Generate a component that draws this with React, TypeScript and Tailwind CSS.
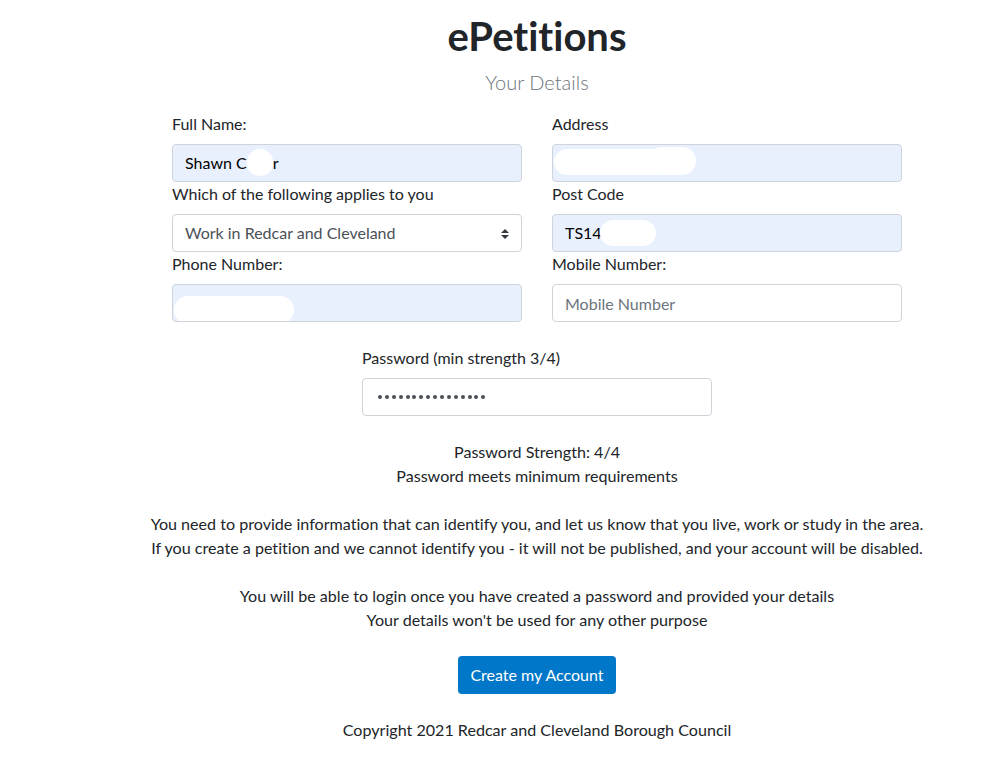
import React from 'react';

const font = { fontFamily: 'Lato, "Noto Sans", sans-serif' };

function Label({ children }: { children: React.ReactNode }) {
  return <label className="block h-6 mb-2 text-[16px] leading-6 text-[#212529]">{children}</label>;
}

function Blob({ className }: { className: string }) {
  return <span className={`absolute bg-white rounded-full ${className}`} />;
}

export default function App() {
  return (
    <div className="min-h-[758px] w-[996px] bg-white text-[#212529] [font-variant-ligatures:none]" style={font}>
      <div className="w-[730px] ml-[172px] pt-[12px]">
        <h1 className="text-center text-[40px] leading-[48px] font-bold">ePetitions</h1>
        <h2 className="text-center text-[20px] leading-6 mt-[10px] text-[#6c757d] font-light">Your Details</h2>

        <div className="grid grid-cols-2 gap-x-[30px] mt-[18px]">
          <div>
            <Label>Full Name:</Label>
            <div className="h-[38px] rounded border border-[#ced4da] bg-[#e8f0fe] px-3 flex items-center text-[16px] text-black">
              <span>Shawn C</span>
              <span className="inline-block w-[26px] h-[27px] rounded-full bg-white -mt-[1px]" />
              <span>r</span>
            </div>
            <Label>Which of the following applies to you</Label>
            <div className="relative h-[38px] rounded border border-[#ced4da] bg-white px-3 flex items-center text-[16px] text-[#495057]">
              <span>Work in Redcar and Cleveland</span>
              <svg className="absolute right-[12px] top-[14px]" width="8" height="10" viewBox="0 0 8 10">
                <path d="M4 0 L8 4 H0 Z" fill="#343a40" />
                <path d="M4 10 L8 6 H0 Z" fill="#343a40" />
              </svg>
            </div>
            <Label>Phone Number:</Label>
            <div className="relative h-[38px] rounded border border-[#ced4da] bg-[#e8f0fe] overflow-hidden">
              <Blob className="left-[1px] top-[11px] w-[120px] h-[28px]" />
            </div>
          </div>
          <div>
            <Label>Address</Label>
            <div className="relative h-[38px] rounded border border-[#ced4da] bg-[#e8f0fe]">
              <Blob className="left-[1px] top-[4px] w-[115px] h-[26px]" />
              <Blob className="left-[95px] top-[2px] w-[48px] h-[28px]" />
            </div>
            <Label>Post Code</Label>
            <div className="relative h-[38px] rounded border border-[#ced4da] bg-[#e8f0fe] px-3 flex items-center text-[16px] text-black">
              <span>TS14</span>
              <Blob className="left-[47px] top-[5px] w-[56px] h-[26px]" />
            </div>
            <Label>Mobile Number:</Label>
            <input
              placeholder="Mobile Number"
              className="block w-full h-[38px] rounded border border-[#ced4da] bg-white px-3 text-[16px] text-[#495057] placeholder:text-[#6c757d] outline-none"
            />
          </div>
        </div>

        <div className="w-[350px] mx-auto mt-[24px]">
          <Label>Password (min strength 3/4)</Label>
          <div className="h-[38px] rounded border border-[#ced4da] bg-white pl-[15px] flex items-center gap-[2.9px]">
            {Array.from({ length: 16 }).map((_, i) => (
              <span key={i} className="w-[4px] h-[4px] rounded-full bg-[#495057]" />
            ))}
          </div>
        </div>

        <div className="text-center text-[16.1px] leading-6 mt-[24px] -mx-[60px] whitespace-nowrap">
          <p>Password Strength: 4/4</p>
          <p>Password meets minimum requirements</p>
          <p className="mt-6">You need to provide information that can identify you, and let us know that you live, work or study in the area.</p>
          <p>If you create a petition and we cannot identify you - it will not be published, and your account will be disabled.</p>
          <p className="mt-6">You will be able to login once you have created a password and provided your details</p>
          <p>Your details won't be used for any other purpose</p>
          <button className="mt-6 h-[38px] px-3 rounded bg-[#0077c8] text-white text-[16px]">Create my Account</button>
          <p className="mt-6">Copyright 2021 Redcar and Cleveland Borough Council</p>
        </div>
      </div>
    </div>
  );
}
